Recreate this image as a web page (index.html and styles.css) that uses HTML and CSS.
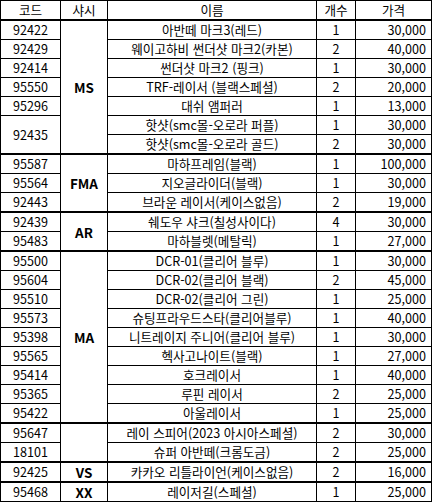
FILE: index.html
```html
<!DOCTYPE html>
<html lang="ko">
<head>
<meta charset="utf-8">
<link rel="stylesheet" href="styles.css">
</head>
<body>
<table class="sheet">
  <colgroup>
    <col class="c-code"><col class="c-sasi"><col class="c-name"><col class="c-cnt"><col class="c-price">
  </colgroup>
  <thead>
    <tr class="head"><th>코드</th><th>샤시</th><th>이름</th><th>개수</th><th>가격</th></tr>
  </thead>
  <tbody>
    <tr class="grp"><td>92422</td><td class="sasi" rowspan="7">MS</td><td>아반떼 마크3(레드)</td><td>1</td><td class="price">30,000</td></tr>
    <tr><td>92429</td><td>웨이고하비 썬더샷 마크2(카본)</td><td>2</td><td class="price">40,000</td></tr>
    <tr><td>92414</td><td>썬더샷 마크2 (핑크)</td><td>1</td><td class="price">30,000</td></tr>
    <tr><td>95550</td><td>TRF-레이서 (블랙스페셜)</td><td>2</td><td class="price">20,000</td></tr>
    <tr><td>95296</td><td>대쉬 앰퍼러</td><td>1</td><td class="price">13,000</td></tr>
    <tr><td rowspan="2">92435</td><td>핫샷(smc몰-오로라 퍼플)</td><td>1</td><td class="price">30,000</td></tr>
    <tr><td>핫샷(smc몰-오로라 골드)</td><td>2</td><td class="price">30,000</td></tr>

    <tr class="grp"><td>95587</td><td class="sasi" rowspan="3">FMA</td><td>마하프레임(블랙)</td><td>1</td><td class="price">100,000</td></tr>
    <tr><td>95564</td><td>지오글라이더(블랙)</td><td>1</td><td class="price">30,000</td></tr>
    <tr><td>92443</td><td>브라운 레이서(케이스없음)</td><td>2</td><td class="price">19,000</td></tr>

    <tr class="grp"><td>92439</td><td class="sasi" rowspan="2">AR</td><td>쉐도우 샤크(칠성사이다)</td><td>4</td><td class="price">30,000</td></tr>
    <tr><td>95483</td><td>마하블렛(메탈릭)</td><td>1</td><td class="price">27,000</td></tr>

    <tr class="grp"><td>95500</td><td class="sasi" rowspan="9">MA</td><td>DCR-01(클리어 블루)</td><td>1</td><td class="price">30,000</td></tr>
    <tr><td>95604</td><td>DCR-02(클리어 블랙)</td><td>2</td><td class="price">45,000</td></tr>
    <tr><td>95510</td><td>DCR-02(클리어 그린)</td><td>1</td><td class="price">25,000</td></tr>
    <tr><td>95573</td><td>슈팅프라우드스타(클리어블루)</td><td>1</td><td class="price">40,000</td></tr>
    <tr><td>95398</td><td>니트레이지 주니어(클리어 블루)</td><td>1</td><td class="price">30,000</td></tr>
    <tr><td>95565</td><td>헥사고나이트(블랙)</td><td>1</td><td class="price">27,000</td></tr>
    <tr><td>95414</td><td>호크레이서</td><td>1</td><td class="price">40,000</td></tr>
    <tr><td>95365</td><td>루핀 레이서</td><td>2</td><td class="price">25,000</td></tr>
    <tr><td>95422</td><td>아울레이서</td><td>1</td><td class="price">25,000</td></tr>

    <tr class="grp"><td>95647</td><td class="sasi" rowspan="2"></td><td>레이 스피어(2023 아시아스페셜)</td><td>2</td><td class="price">30,000</td></tr>
    <tr><td>18101</td><td>슈퍼 아반떼(크롬도금)</td><td>2</td><td class="price">25,000</td></tr>

    <tr class="grp"><td>92425</td><td class="sasi">VS</td><td>카카오 리틀라이언(케이스없음)</td><td>2</td><td class="price">16,000</td></tr>

    <tr class="grp"><td>95468</td><td class="sasi">XX</td><td>레이저길(스페셜)</td><td>1</td><td class="price">25,000</td></tr>
  </tbody>
</table>
</body>
</html>
```

FILE: styles.css
```css
html, body {
  margin: 0;
  padding: 0;
  background: #ffffff;
}

.sheet {
  border-collapse: collapse;
  table-layout: fixed;
  width: 431px;
  font-family: "Noto Sans CJK KR", "Noto Sans", sans-serif;
  font-size: 12.6px;
  color: #000000;
}

.c-code { width: 60px; }
.c-sasi { width: 47px; }
.c-name { width: 209px; }
.c-cnt { width: 39px; }
.c-price { width: 76px; }

.sheet th,
.sheet td {
  border: 1px solid #000000;
  padding: 0;
  height: 18px;
  line-height: 18px;
  text-align: center;
  font-weight: 400;
  white-space: nowrap;
  overflow: hidden;
  vertical-align: middle;
}

.sheet thead th {
  border-bottom: 2px solid #000000;
}

.sheet tr.grp td {
  border-top: 2px solid #000000;
}

.sheet tbody tr:first-child td {
  border-top: 2px solid #000000;
}

.sheet td.sasi {
  font-weight: 700;
  font-size: 13.5px;
}

.sheet td.price {
  text-align: right;
  padding-right: 5px;
}
```
